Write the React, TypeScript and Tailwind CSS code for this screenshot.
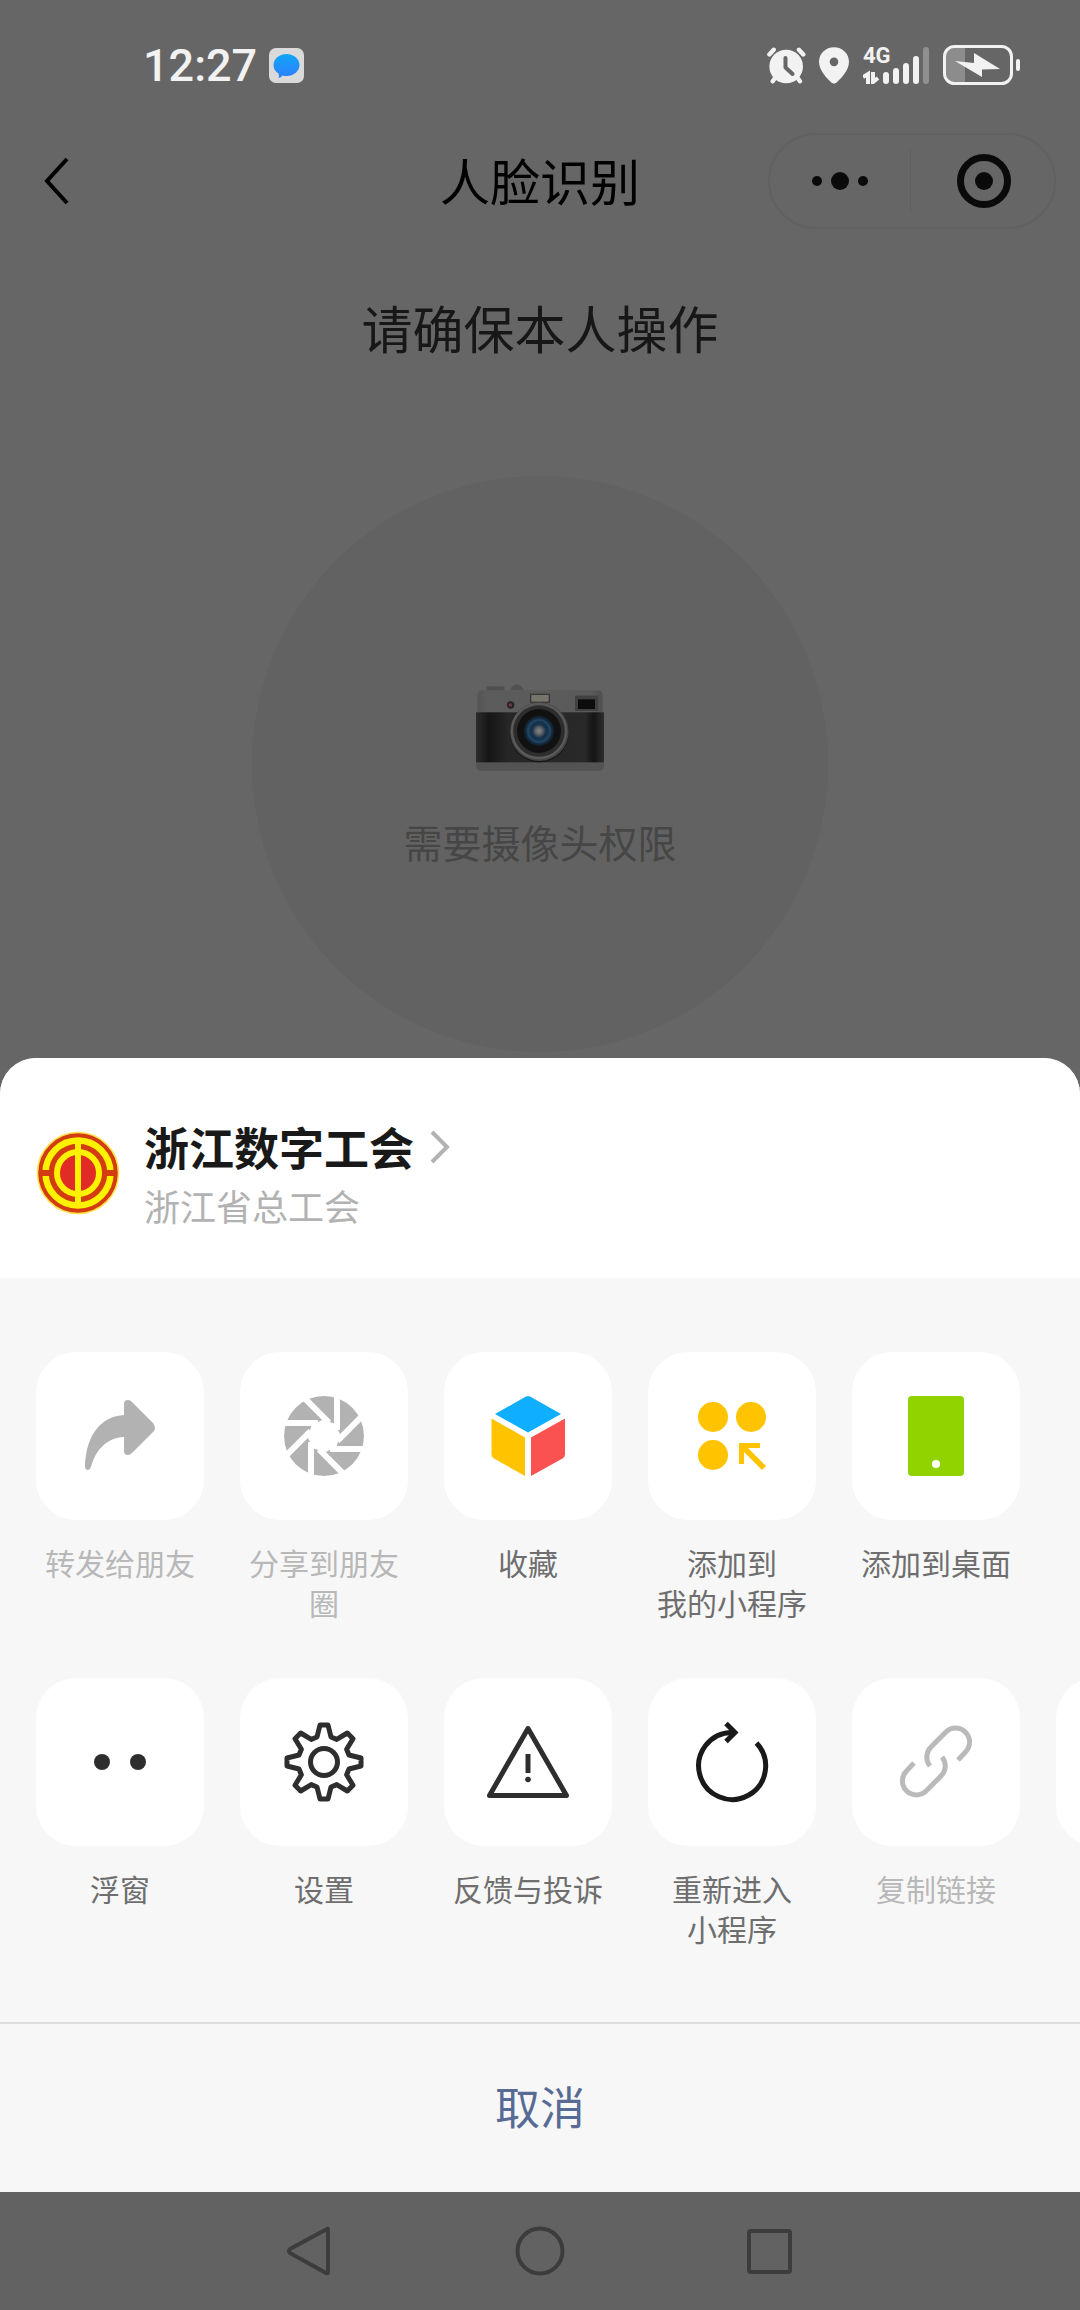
import React from 'react';

type Action = {
  label: string;
  icon: React.ReactNode;
  disabled?: boolean;
};

// Outline of the eight-toothed settings gear
const gearPoints = Array.from({ length: 8 })
  .flatMap((_, i) => {
    const a = (i * Math.PI) / 4;
    return [[-7, -25], [-4, -37], [4, -37], [7, -25]].map(([x, y]) => {
      const px = 84 + x * Math.cos(a) - y * Math.sin(a);
      const py = 84 + x * Math.sin(a) + y * Math.cos(a);
      return `${px.toFixed(2)},${py.toFixed(2)}`;
    });
  })
  .join(' ');

function TileIcon({ children }: { children?: React.ReactNode }) {
  return (
    <svg className="h-full w-full" viewBox="0 0 168 168" fill="none" aria-hidden="true">
      {children}
    </svg>
  );
}

const shareIcon = (
  <TileIcon>
    <path
      fill="#b2b2b2"
      d="M49 114C50 82 66 64 88 63V52Q88 48 92 48Q94 48 96 50L117 71Q121 76 117 80L96 101Q94 103 92 103Q88 103 88 99V85C71 86 60 97 55 115Q54 118 52 118Q49 118 49 114Z"
    />
  </TileIcon>
);

const momentsIcon = (
  <TileIcon>
    <circle cx="84" cy="84" r="40" fill="#b2b2b2" />
    <g transform="translate(84 84)">
      {[0, 45, 90, 135, 180, 225, 270, 315].map((deg) => (
        <path key={deg} d="M13 -42V-6" stroke="#fff" strokeWidth="6" transform={`rotate(${deg})`} />
      ))}
      <polygon fill="#fff" points="10,-12.8 16.1,-2 12.8,10 2,16.1 -10,12.8 -16.1,2 -12.8,-10 -2,-16.1" />
    </g>
  </TileIcon>
);

const favoriteIcon = (
  <TileIcon>
    <path fill="#10aeff" d="M82 44.600Q84 43.400 86 44.600L117 62L84 80.500L51 62Z" />
    <path fill="#ffc300" d="M47.500 66.500L81 85.500V124L50 106.500Q47.500 105 47.500 102.500Z" />
    <path fill="#fa5151" d="M121 66.500L87 85.500V124L118.500 106.500Q121 105 121 102.500Z" />
  </TileIcon>
);

const addToMineIcon = (
  <TileIcon>
    <g fill="#ffc300">
      <circle cx="65" cy="65" r="15" />
      <circle cx="103" cy="65" r="15" />
      <circle cx="65" cy="103" r="15" />
      <path d="M91 91H112V96H100L118 114L114 118L96 100V112H91Z" />
    </g>
  </TileIcon>
);

const desktopIcon = (
  <TileIcon>
    <rect x="56" y="44" width="56" height="80" rx="4" fill="#91d300" />
    <circle cx="84" cy="112" r="4" fill="#fff" />
  </TileIcon>
);

const floatIcon = (
  <TileIcon>
    <circle cx="66" cy="84" r="8" fill="#2e2e2e" />
    <circle cx="102" cy="84" r="8" fill="#2e2e2e" />
  </TileIcon>
);

const settingsIcon = (
  <TileIcon>
    <g stroke="#2e2e2e" strokeWidth="5" strokeLinejoin="round">
      <polygon points={gearPoints} />
      <circle cx="84" cy="84" r="13.500" />
    </g>
  </TileIcon>
);

const feedbackIcon = (
  <TileIcon>
    <path d="M84 50.500L122.500 117.500H45.500Z" stroke="#2e2e2e" strokeWidth="5" strokeLinejoin="round" />
    <path d="M84 76V95" stroke="#2e2e2e" strokeWidth="5" />
    <circle cx="84" cy="101.500" r="2.800" fill="#2e2e2e" />
  </TileIcon>
);

const reenterIcon = (
  <TileIcon>
    <g stroke="#191919" strokeWidth="5">
      <path d="M87 54.500H84A33.500 33.500 0 1 0 108.500 65" />
      <path d="M78 45.500L87 54.500L78 63.500" />
    </g>
  </TileIcon>
);

const linkIcon = (
  <TileIcon>
    <g stroke="#bababa" strokeWidth="5">
      <path d="M106 82L113.500 74A14 14 0 0 0 93.700 54.200L79 69A14 14 0 0 0 78 88" />
      <path d="M106 82L113.500 74A14 14 0 0 0 93.700 54.200L79 69A14 14 0 0 0 78 88" transform="rotate(180 84 83.500)" />
    </g>
  </TileIcon>
);

const shareActions: Action[] = [
  { label: '转发给朋友', icon: shareIcon, disabled: true },
  { label: '分享到朋友圈', icon: momentsIcon, disabled: true },
  { label: '收藏', icon: favoriteIcon },
  { label: '添加到\n我的小程序', icon: addToMineIcon },
  { label: '添加到桌面', icon: desktopIcon },
];

const toolActions: Action[] = [
  { label: '浮窗', icon: floatIcon },
  { label: '设置', icon: settingsIcon },
  { label: '反馈与投诉', icon: feedbackIcon },
  { label: '重新进入\n小程序', icon: reenterIcon },
  { label: '复制链接', icon: linkIcon, disabled: true },
  { label: '', icon: <TileIcon /> },
];

function ActionRow({ actions }: { actions: Action[] }) {
  return (
    <div className="flex min-h-[272px] items-start gap-9 overflow-hidden px-9">
      {actions.map(({ label, icon, disabled }) => (
        <button
          key={label}
          type="button"
          disabled={disabled}
          aria-label={label || '更多'}
          className="flex w-[168px] shrink-0 flex-col items-center gap-[22px]"
        >
          <span className="h-[168px] w-[168px] rounded-[40px] bg-white">{icon}</span>
          <span
            className={`text-center text-[30px] leading-[40px] whitespace-pre-line ${
              disabled ? 'text-[#b8b8b8]' : 'text-[#6e6e6e]'
            }`}
          >
            {label}
          </span>
        </button>
      ))}
    </div>
  );
}

function StatusBar() {
  return (
    <div className="flex h-[130px] items-center justify-between pr-[58px] pl-[143px] text-[#f2f2f2]">
      <div className="flex items-center gap-3">
        <span className="font-[Roboto,sans-serif] text-[45px] leading-none font-medium">12:27</span>
        <svg width="35" height="35" viewBox="0 0 35 35" aria-hidden="true">
          <defs>
            <linearGradient id="bubble" x1="0" y1="0" x2="0" y2="1">
              <stop offset="0" stopColor="#10a5f5" />
              <stop offset="1" stopColor="#2f80ff" />
            </linearGradient>
          </defs>
          <rect width="35" height="35" rx="7" fill="#dadada" />
          <path
            fill="url(#bubble)"
            d="M17.500 6C25 6 30.500 11 30.500 17C30.500 23 25 28 17.500 28Q15 28 13.500 27.500Q12 29.500 9.500 30Q10.500 28 9.500 25.500C6 23.500 4.500 20.500 4.500 17C4.500 11 10 6 17.500 6Z"
          />
        </svg>
      </div>

      <div className="flex items-center">
        <svg className="mr-[13px]" width="39" height="37" viewBox="0 0 116 110" fill="none" aria-hidden="true">
          <g stroke="currentColor" strokeWidth="13" strokeLinecap="round">
            <path d="M7 22L20 8M95 8L108 22" />
            <path d="M27 88L17 102M88 88L98 102" />
          </g>
          <circle cx="57" cy="58" r="50" fill="currentColor" />
          <path d="M55 33V61L76 80" stroke="#666" strokeWidth="12" strokeLinecap="round" strokeLinejoin="round" />
        </svg>
        <svg className="mr-[14px]" width="30" height="37" viewBox="0 0 90 110" aria-hidden="true">
          <path
            fill="currentColor"
            fillRule="evenodd"
            d="M45 0C20 0 0 19 0 44C0 70 25 95 38 107Q45 112 52 107C65 95 90 70 90 44C90 19 70 0 45 0ZM45 31A13 13 0 1 1 45 57A13 13 0 1 1 45 31Z"
          />
        </svg>
        <div className="relative mr-[14px] h-[37px] w-[66px]">
          <span className="absolute -top-px left-0 font-[Roboto,sans-serif] text-[22px] leading-[20px] font-bold">4G</span>
          <svg className="h-full w-full" viewBox="0 0 66 37" fill="none" aria-hidden="true">
            <g stroke="currentColor" strokeWidth="4">
              <path d="M0 30L5 27V37" />
              <path d="M10 25V35L15 31" />
            </g>
            <g fill="currentColor">
              <rect x="20" y="25" width="6" height="12" rx="3" />
              <rect x="30" y="21" width="6" height="16" rx="3" />
              <rect x="40" y="16" width="6" height="21" rx="3" />
              <rect x="50" y="9" width="6" height="28" rx="3" />
              <rect x="60" y="0" width="6" height="37" rx="3" opacity="0.3" />
            </g>
          </svg>
        </div>
        <svg width="79" height="40" viewBox="0 0 79 40" fill="none" aria-hidden="true">
          <path d="M22 3H12Q3 3 3 12V28Q3 37 12 37H22Z" fill="#8c8c8c" />
          <rect x="1.500" y="1.500" width="67" height="37" rx="10" stroke="currentColor" strokeWidth="3" />
          <rect x="73" y="14" width="4" height="12" rx="2" fill="currentColor" />
          <path d="M12 16L31 18V8L57 24L39 24.500V32Z" fill="currentColor" />
        </svg>
      </div>
    </div>
  );
}

function NavBar() {
  return (
    <header className="grid h-[102px] grid-cols-[1fr_auto_1fr] items-center px-6 text-black">
      <button type="button" aria-label="返回" className="justify-self-start px-5">
        <svg width="26" height="48" viewBox="0 0 26 48" fill="none" aria-hidden="true">
          <path d="M23 2L3 24L23 46" stroke="currentColor" strokeWidth="4" />
        </svg>
      </button>
      <h1 className="pb-1 text-[50px] leading-[72px]">人脸识别</h1>
      <div className="flex h-24 w-72 items-center justify-self-end rounded-full border-2 border-[#616161]">
        <button type="button" aria-label="更多" className="flex flex-1 items-center justify-center gap-[9px]">
          <span className="h-[10px] w-[10px] rounded-full bg-[#0a0a0a]" />
          <span className="h-[18px] w-[18px] rounded-full bg-[#0a0a0a]" />
          <span className="h-[10px] w-[10px] rounded-full bg-[#0a0a0a]" />
        </button>
        <span className="h-16 w-px bg-[#606060]" />
        <button type="button" aria-label="关闭" className="flex flex-1 items-center justify-center pl-1">
          <span className="flex h-[54px] w-[54px] items-center justify-center rounded-full border-[7px] border-[#0a0a0a]">
            <span className="h-[18px] w-[18px] rounded-full bg-[#0a0a0a]" />
          </span>
        </button>
      </div>
    </header>
  );
}

function CameraIcon() {
  return (
    <svg width="128" height="88" viewBox="0 0 384 264" aria-hidden="true">
      <defs>
        <linearGradient id="band" x1="0" y1="0" x2="1" y2="0">
          <stop offset="0" stopColor="#2c2c2c" />
          <stop offset="0.1" stopColor="#161616" />
          <stop offset="0.25" stopColor="#262626" />
          <stop offset="0.85" stopColor="#292929" />
          <stop offset="0.92" stopColor="#141414" />
          <stop offset="1" stopColor="#2e2e2e" />
        </linearGradient>
        <linearGradient id="plate" x1="0" y1="0" x2="1" y2="0">
          <stop offset="0" stopColor="#545454" />
          <stop offset="0.08" stopColor="#5c5c5c" />
          <stop offset="0.9" stopColor="#5a5a5a" />
          <stop offset="1" stopColor="#505050" />
        </linearGradient>
        <radialGradient id="glass">
          <stop offset="0" stopColor="#8a8a8a" />
          <stop offset="0.25" stopColor="#5a6066" />
          <stop offset="0.45" stopColor="#16314a" />
          <stop offset="0.75" stopColor="#1a3852" />
          <stop offset="1" stopColor="#101820" />
        </radialGradient>
      </defs>
      <rect x="32" y="10" width="53" height="14" rx="4" fill="#505050" />
      <path d="M102 22L108 10Q122 -2 136 10L145 22Z" fill="#525252" />
      <path d="M4 90V38Q4 22 20 22H364Q380 22 380 38V90Z" fill="url(#plate)" />
      <path d="M0 236H384V248Q384 263 369 263H15Q0 263 0 248Z" fill="#535353" />
      <rect y="88" width="384" height="150" fill="url(#band)" />
      <rect x="164" y="34" width="56" height="24" fill="#77746c" stroke="#3a3835" strokeWidth="4" />
      <rect x="297" y="38" width="70" height="46" fill="#414141" />
      <rect x="306" y="49" width="51" height="29" fill="#0c0c0c" />
      <circle cx="104" cy="66" r="11" fill="#2b2023" />
      <circle cx="103" cy="66" r="5" fill="#6b3c44" />
      <circle cx="190" cy="150" r="88" fill="#151515" />
      <circle cx="190" cy="146" r="88" fill="#444" />
      <circle cx="189" cy="144" r="81" fill="#2d2d2d" stroke="#5a5a5a" strokeWidth="7" />
      <circle cx="189" cy="144" r="66" fill="#111" />
      <circle cx="189" cy="144" r="46" fill="url(#glass)" />
      <circle cx="189" cy="144" r="33" fill="none" stroke="#204666" strokeWidth="5" />
    </svg>
  );
}

function UnionLogo() {
  return (
    <svg width="84" height="84" viewBox="0 0 84 84" fill="none" aria-hidden="true">
      <circle cx="42" cy="42" r="40.500" fill="#d23c10" stroke="#ffe14a" strokeWidth="1.500" />
      <circle cx="42" cy="42" r="32.500" stroke="#fff200" strokeWidth="6.500" />
      <path d="M5 42H16M68 42H79" stroke="#d23c10" strokeWidth="6" />
      <circle cx="42" cy="42" r="21" fill="#e02b26" stroke="#fff200" strokeWidth="6" />
      <path d="M42 10V74" stroke="#fff200" strokeWidth="6" />
    </svg>
  );
}

function App() {
  return (
    <div className="flex min-h-screen flex-col overflow-x-hidden bg-[#666] font-['Noto_Sans_CJK_SC',sans-serif]">
      <StatusBar />
      <NavBar />

      {/* Face verification page, dimmed behind the sheet */}
      <main className="flex flex-1 flex-col items-center pt-[59px]">
        <h2 className="text-[51px] leading-[72px] text-[#171717]">请确保本人操作</h2>
        <div className="mt-[113px] flex h-[576px] w-[576px] flex-col items-center justify-center gap-[46px] rounded-full bg-[#626262] pt-5">
          <CameraIcon />
          <p className="text-[39px] leading-[48px] text-[#464646]">需要摄像头权限</p>
        </div>
      </main>

      {/* Action sheet */}
      <section className="overflow-hidden rounded-t-[36px] bg-[#f7f7f7]">
        <a href="#about" className="flex items-center gap-6 bg-white px-9 pt-[59px] pb-[49px]">
          <UnionLogo />
          <div>
            <div className="flex items-center gap-4">
              <span className="text-[45px] leading-[60px] font-bold text-[#191919]">浙江数字工会</span>
              <svg width="20" height="34" viewBox="0 0 20 34" fill="none" aria-hidden="true">
                <path d="M2 2L17 17L2 32" stroke="#b2b2b2" strokeWidth="4" />
              </svg>
            </div>
            <p className="mt-1 text-[36px] leading-[48px] text-[#b2b2b2]">浙江省总工会</p>
          </div>
        </a>
        <div className="flex flex-col gap-[54px] pt-[74px] pb-[72px]">
          <ActionRow actions={shareActions} />
          <ActionRow actions={toolActions} />
        </div>
        <button type="button" className="h-[170px] w-full border-t-2 border-[#dedede] pb-1 text-[45px] leading-[60px] text-[#576b95]">
          取消
        </button>
      </section>

      {/* System navigation */}
      <nav className="flex h-[118px] items-center justify-center gap-[180px] bg-[#626262] text-[#3c3c3c]">
        <button type="button" aria-label="返回">
          <svg width="50" height="50" viewBox="0 0 50 50" fill="none" aria-hidden="true">
            <path d="M42 3Q43 2 43 4V46Q43 48 41 47L5 27Q3 25 5 23Z" stroke="currentColor" strokeWidth="4" strokeLinejoin="round" />
          </svg>
        </button>
        <button type="button" aria-label="主页">
          <svg width="50" height="50" viewBox="0 0 50 50" fill="none" aria-hidden="true">
            <circle cx="25" cy="25" r="22.500" stroke="currentColor" strokeWidth="4" />
          </svg>
        </button>
        <button type="button" aria-label="最近任务">
          <svg width="50" height="50" viewBox="0 0 50 50" fill="none" aria-hidden="true">
            <rect x="4" y="5" width="41" height="41" rx="2" stroke="currentColor" strokeWidth="4" />
          </svg>
        </button>
      </nav>
    </div>
  );
}

export default App;
